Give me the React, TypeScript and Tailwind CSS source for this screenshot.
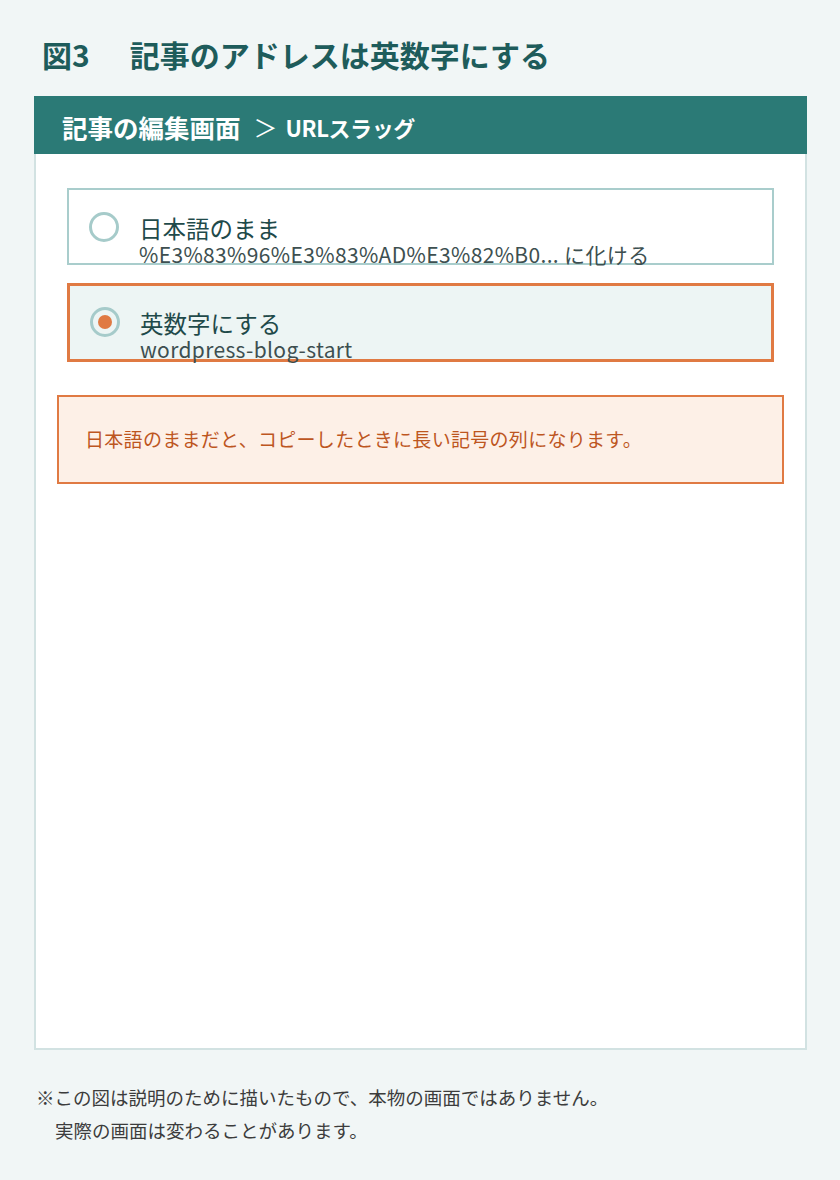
import React from 'react';

const font = { fontFamily: '"Noto Sans CJK JP", "Noto Sans", sans-serif' };

type OptionProps = {
  title: string;
  sub: string;
  selected?: boolean;
};

const Option: React.FC<OptionProps> = ({ title, sub, selected }) => {
  const box = selected
    ? 'h-[79px] border-[3px] border-[#e07a43] bg-[#edf5f4] pt-[24px]'
    : 'h-[77px] border-2 border-[#a9cdcc] bg-white pt-[25px]';
  return (
    <div className={`flex items-start pl-[20px] ${box}`}>
      <div className="mt-[-3px] flex h-[30px] w-[30px] shrink-0 items-center justify-center rounded-full border-[3px] border-[#a6cbca]">
        {selected && <div className="h-[14px] w-[14px] rounded-full bg-[#e07a43]" />}
      </div>
      <div className="ml-[20px] text-[#1f4a4a]">
        <div className="text-[23.5px] leading-[26px] whitespace-nowrap">{title}</div>
        <div className="text-[21px] leading-[26px] tracking-[0.35px] whitespace-nowrap text-[#3d4f50]">{sub}</div>
      </div>
    </div>
  );
};

const App: React.FC = () => {
  return (
    <div className="min-h-[1180px] w-[840px] bg-[#f1f6f6] pt-[34px]" style={font}>
      {/* Title */}
      <h1 className="pl-[42px] text-[30px] font-bold leading-[40px] text-[#1e5c5b]">
        図3<span className="ml-[40px]">記事のアドレスは英数字にする</span>
      </h1>

      {/* Panel */}
      <div className="ml-[34px] mt-[22px] h-[954px] w-[773px] border-2 border-[#d2e2e2] bg-white">
        <div className="-mx-[2px] -mt-[2px] flex h-[58px] items-center pl-[28px] pt-[4px] bg-[#2b7a76] font-bold text-white">
          <span className="text-[25.5px]">記事の編集画面</span>
          <span className="ml-[13px] mr-[8px] text-[24px] font-normal">＞</span>
          <span className="text-[22px] tracking-[-0.4px]">URLスラッグ</span>
        </div>

        <div className="px-[31px] pt-[34px]">
          <Option title="日本語のまま" sub="%E3%83%96%E3%83%AD%E3%82%B0... に化ける" />
          <div className="mt-[18px]">
            <Option title="英数字にする" sub="wordpress-blog-start" selected />
          </div>
          <div className="-mx-[10px] mt-[33px] flex h-[89px] items-center border-2 border-[#e07a43] bg-[#fdf0e7] pl-[26px] text-[19px] tracking-[0.3px] text-[#bd561f]">
            日本語のままだと、コピーしたときに長い記号の列になります。
          </div>
        </div>
      </div>

      {/* Footnote */}
      <div className="mt-[31px] pl-[36px] text-[18.5px] leading-[33px] text-[#3c3c3c]">
        <p>※この図は説明のために描いたもので、本物の画面ではありません。</p>
        <p className="pl-[19px]">実際の画面は変わることがあります。</p>
      </div>
    </div>
  );
};

export default App;
